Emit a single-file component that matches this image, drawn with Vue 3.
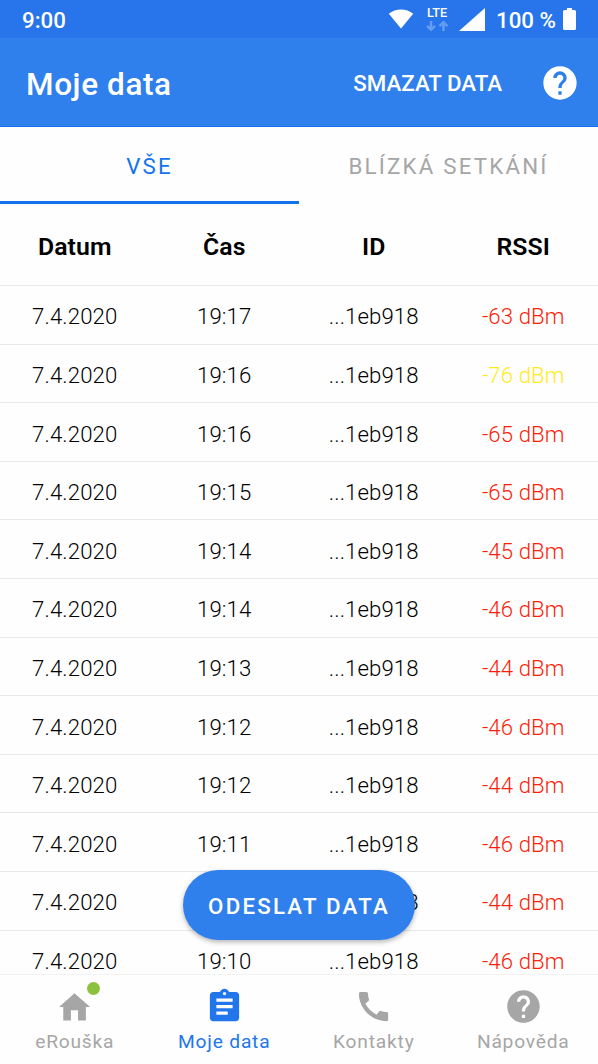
<script setup>
import { ref } from "vue";

const activeTab = ref("all");
const tabs = [
  { key: "all", label: "VŠE" },
  { key: "close", label: "BLÍZKÁ SETKÁNÍ" },
];

const columns = ["Datum", "Čas", "ID", "RSSI"];

const rows = [
  ["19:17", -63],
  ["19:16", -76],
  ["19:16", -65],
  ["19:15", -65],
  ["19:14", -45],
  ["19:14", -46],
  ["19:13", -44],
  ["19:12", -46],
  ["19:12", -44],
  ["19:11", -46],
  ["19:11", -44],
  ["19:10", -46],
].map(([time, rssi]) => ({ date: "7.4.2020", time, id: "...1eb918", rssi }));

const activeNav = ref("data");
const nav = [
  {
    key: "home",
    label: "eRouška",
    path: "M12 3.8 2.5 12.3H5.1V20.6H9.8V14.3H14.2V20.6H19V12.3H21.6Z",
    dot: true,
  },
  {
    key: "data",
    label: "Moje data",
    path: "M19 3h-4.18C14.4 1.84 13.3 1 12 1c-1.3 0-2.4.84-2.82 2H5c-1.1 0-2 .9-2 2v14c0 1.1.9 2 2 2h14c1.1 0 2-.9 2-2V5c0-1.1-.9-2-2-2zm-7 0c.55 0 1 .45 1 1s-.45 1-1 1-1-.45-1-1 .45-1 1-1zm2 14H7v-2h7v2zm3-4H7v-2h10v2zm0-4H7V7h10v2z",
  },
  {
    key: "contacts",
    label: "Kontakty",
    path: "M20.01 15.38c-1.23 0-2.42-.2-3.53-.56-.35-.12-.74-.03-1.01.24l-1.57 1.97c-2.83-1.35-5.48-3.9-6.89-6.83l1.95-1.66c.27-.28.35-.67.24-1.02-.37-1.11-.56-2.3-.56-3.53 0-.54-.45-.99-.99-.99H4.19C3.65 3 3 3.24 3 3.99 3 13.28 10.73 21 20.01 21c.71 0 .99-.63.99-1.18v-3.45c0-.54-.45-.99-.99-.99z",
  },
  {
    key: "help",
    label: "Nápověda",
    path: "M12 2C6.48 2 2 6.48 2 12s4.48 10 10 10 10-4.48 10-10S17.52 2 12 2zm1 17h-2v-2h2v2zm2.07-7.75l-.9.92C13.45 12.9 13 13.5 13 15h-2v-.5c0-1.1.45-2.1 1.17-2.83l1.24-1.26c.37-.36.59-.86.59-1.41 0-1.1-.9-2-2-2s-2 .9-2 2H8c0-2.21 1.79-4 4-4s4 1.79 4 4c0 .88-.36 1.68-.93 2.25z",
  },
];
</script>

<template>
  <div class="screen">
    <div class="status">
      <span class="clock">9:00</span>
      <svg class="wifi" viewBox="0 0 26 20">
        <path d="M13 19.5 .8 4.8C7.5-.9 18.5-.9 25.200 4.800Z" />
      </svg>
      <div class="lte">
        <span>LTE</span>
        <svg viewBox="0 0 22 10">
          <path d="M5 0v8.500M1 4.800l4 4 4-4M17.500 10V1.500M13.500 5.200l4-4 4 4" />
        </svg>
      </div>
      <svg class="signal" viewBox="0 0 26 23"><path d="M26 0V23H0Z" /></svg>
      <span class="percent">100 %</span>
      <svg class="battery" viewBox="0 0 13 22">
        <path d="M4 0h5v2h2.500q1.500 0 1.500 1.500v17q0 1.500-1.500 1.500h-10q-1.500 0-1.500-1.500V3.500q0-1.500 1.500-1.500H4z" />
      </svg>
    </div>

    <header class="bar">
      <h1>Moje data</h1>
      <button class="clear">SMAZAT DATA</button>
      <svg class="help" viewBox="0 0 24 24"><path :d="nav[3].path" /></svg>
    </header>

    <div class="tabs">
      <button
        v-for="tab in tabs"
        :key="tab.key"
        :class="{ active: tab.key === activeTab }"
        @click="activeTab = tab.key"
      >
        {{ tab.label }}
      </button>
    </div>

    <main class="list">
      <div class="row head">
        <span v-for="col in columns" :key="col">{{ col }}</span>
      </div>
      <div v-for="(row, i) in rows" :key="i" class="row">
        <span>{{ row.date }}</span>
        <span>{{ row.time }}</span>
        <span>{{ row.id }}</span>
        <span :class="row.rssi < -70 ? 'mid' : 'near'">{{ row.rssi }} dBm</span>
      </div>
      <button class="send">ODESLAT DATA</button>
    </main>

    <nav class="nav">
      <a
        v-for="item in nav"
        :key="item.key"
        :class="{ active: item.key === activeNav }"
        @click="activeNav = item.key"
      >
        <span class="icon">
          <svg viewBox="0 0 24 24"><path :d="item.path" /></svg>
          <i v-if="item.dot" class="dot"></i>
        </span>
        <span>{{ item.label }}</span>
      </a>
    </nav>
  </div>
</template>

<style>
body {
  margin: 0;
  background: #fff;
}
</style>

<style scoped>
.screen {
  width: 598px;
  height: 1064px;
  display: flex;
  flex-direction: column;
  overflow: hidden;
  background: #fefefe;
  color: #000;
  font-family: Roboto, sans-serif;
}
button {
  border: 0;
  padding: 0;
  background: none;
  font-family: inherit;
}
svg {
  display: block;
  fill: currentColor;
}
.status {
  flex: none;
  height: 38px;
  box-sizing: border-box;
  padding: 0 23px 0 22px;
  display: flex;
  align-items: center;
  background: #2774eb;
  color: #fff;
  font-weight: 500;
}
.clock {
  flex: 1;
  padding-top: 2px;
  font-size: 22.300px;
}
.wifi {
  width: 26px;
  height: 20px;
  margin-right: 11px;
}
.lte {
  width: 24px;
  display: flex;
  flex-direction: column;
  align-items: center;
  gap: 2px;
  margin-right: 10px;
  font-size: 12.700px;
  line-height: 12px;
}
.lte svg {
  width: 22px;
  height: 10px;
  fill: none;
  stroke: #659bf1;
  stroke-width: 2.500;
}
.signal {
  width: 26px;
  height: 23px;
  margin-right: 11px;
}
.percent {
  width: 62px;
  padding-top: 2px;
  font-size: 22.300px;
  white-space: nowrap;
}
.battery {
  width: 13px;
  height: 22px;
  margin-left: 5px;
  margin-right: -1px;
}
.bar {
  flex: none;
  height: 89px;
  box-sizing: border-box;
  padding: 1px 18px 0 26px;
  display: flex;
  align-items: center;
  background: #2f80ed;
  border-bottom: 1px solid #0f73ea;
  color: #fff;
}
h1 {
  flex: 1;
  margin: 0;
  padding-top: 3px;
  font-size: 31.500px;
  font-weight: 500;
  letter-spacing: 0.600px;
}
.clear {
  padding-top: 1px;
  color: #fff;
  font-size: 22.300px;
  font-weight: 500;
  margin-right: 38px;
}
.help {
  width: 40px;
  height: 40px;
}
.tabs {
  flex: none;
  height: 77px;
  display: flex;
}
.tabs button {
  flex: 1;
  padding-top: 4px;
  color: #a6a6a6;
  font-size: 22.300px;
  font-weight: 450;
  letter-spacing: 2.200px;
  border-bottom: 3px solid transparent;
}
.tabs .active {
  color: #1273eb;
  border-color: #1273eb;
}
.list {
  flex: 1;
  min-height: 0;
  position: relative;
  overflow: hidden;
}
.row {
  height: 58.620px;
  box-sizing: border-box;
  padding-top: 3px;
  display: grid;
  grid-template-columns: repeat(4, 1fr);
  align-items: center;
  text-align: center;
  border-bottom: 1.500px solid #e8e8e8;
  font-size: 22.200px;
  font-weight: 350;
}
.row span {
  letter-spacing: 0.100px;
}
.head {
  height: 82px;
  font-size: 24.800px;
  font-weight: 560;
}
.near {
  color: #fb1f0a;
}
.mid {
  color: #ffeb1c;
}
.send {
  position: absolute;
  left: 183px;
  bottom: 34px;
  width: 232px;
  height: 70px;
  padding-top: 2px;
  border-radius: 35px;
  background: #2f80ed;
  box-shadow: 0 2px 5px rgba(0, 0, 0, 0.3);
  color: #fff;
  font-size: 22.300px;
  font-weight: 500;
  letter-spacing: 2.200px;
}
.nav {
  flex: none;
  height: 90px;
  box-sizing: border-box;
  padding-top: 12px;
  display: grid;
  grid-template-columns: repeat(4, 1fr);
  border-top: 1px solid #f3f3f3;
}
.nav a {
  display: flex;
  flex-direction: column;
  align-items: center;
  gap: 4px;
  color: #a6a6a6;
  font-size: 19.200px;
  font-weight: 370;
  line-height: 23px;
  letter-spacing: 0.800px;
}
.nav .active {
  color: #2176eb;
}
.icon {
  position: relative;
}
.icon svg {
  width: 39px;
  height: 39px;
}
.dot {
  position: absolute;
  top: -5px;
  right: -6px;
  width: 13px;
  height: 13px;
  border-radius: 50%;
  background: #8bc13c;
}
</style>
